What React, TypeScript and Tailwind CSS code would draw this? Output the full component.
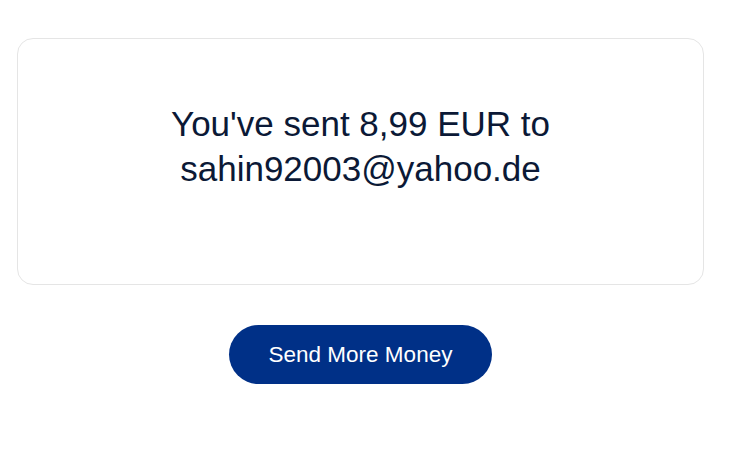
export default function App() {
  return (
    <div className="min-h-screen bg-white" style={{ fontFamily: '"Liberation Sans", Arial, sans-serif' }}>
      <div className="w-[721px] px-[17px] pt-[38px]">
        <div className="rounded-2xl border border-[#e5e5e5] bg-white pt-[62px] pb-[93px] text-center">
          <h1 className="text-[35px] leading-[45px] font-normal text-[#0b1936]">
            You've sent 8,99 EUR to
            <br />
            sahin92003@yahoo.de
          </h1>
        </div>
        <div className="mt-[40px] flex justify-center">
          <button className="h-[59px] w-[263px] rounded-full bg-[#003087] text-[22.5px] text-white">
            Send More Money
          </button>
        </div>
      </div>
    </div>
  );
}
